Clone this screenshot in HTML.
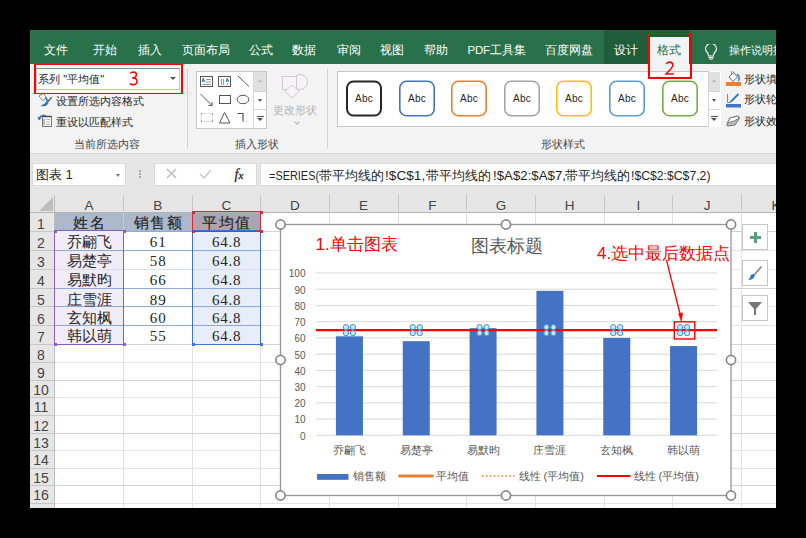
<!DOCTYPE html>
<html><head><meta charset="utf-8">
<style>
*{box-sizing:border-box;margin:0;padding:0}
html,body{width:806px;height:538px;overflow:hidden;background:#000}
body{position:relative;font-family:"Liberation Sans",sans-serif;color:#262626}
.a{position:absolute;white-space:nowrap}
#win{position:absolute;left:30px;top:30px;width:746px;height:478px;background:#e6e6e6;overflow:hidden}
.tab{position:absolute;top:43px;font-size:12px;line-height:14px;color:#fff;white-space:nowrap}
.sep{position:absolute;width:1px;background:#d2d2d2}
.t12{position:absolute;font-size:11.3px;line-height:14px;color:#262626;white-space:nowrap}
.glabel{position:absolute;font-size:11.3px;line-height:14px;color:#444;white-space:nowrap}
.sbox{position:absolute;top:80.5px;width:36px;height:36px;border:2px solid;border-radius:7px;background:#fff;font-size:10px;line-height:32px;text-align:center;color:#262626}
.colh{position:absolute;top:195px;height:17px;font-size:13px;line-height:17px;text-align:center;color:#444;border-right:1px solid #c6c6c6}
.rowh{position:absolute;left:30px;width:24.5px;font-size:13px;text-align:center;color:#444;border-bottom:1px solid #c6c6c6}
.hl{position:absolute;height:1px;background:#e1e1e1}
.vl{position:absolute;width:1px;background:#e1e1e1}
.cell{position:absolute;font-family:"Liberation Serif",serif;font-size:15px;line-height:19px;padding-top:1.5px;text-align:center;color:#262626;white-space:nowrap}
</style></head><body>
<div id="win"></div>
<!-- TABS -->
<div class="a" style="left:30px;top:30px;width:746px;height:34px;background:#29714a"></div>
<div class="tab" style="left:44px">文件</div>
<div class="tab" style="left:93px">开始</div>
<div class="tab" style="left:138px">插入</div>
<div class="tab" style="left:182px">页面布局</div>
<div class="tab" style="left:249px">公式</div>
<div class="tab" style="left:292px">数据</div>
<div class="tab" style="left:337px">审阅</div>
<div class="tab" style="left:380px">视图</div>
<div class="tab" style="left:424px">帮助</div>
<div class="tab" style="left:467.5px;font-size:11.5px;letter-spacing:-0.2px">PDF工具集</div>
<div class="tab" style="left:545px;font-size:11.55px">百度网盘</div>
<div class="a" style="left:604px;top:30px;width:86px;height:34px;background:#215c3b"></div>
<div class="tab" style="left:614px">设计</div>
<div class="a" style="left:649px;top:37px;width:40px;height:27px;background:#f3f3f3"></div>
<div class="tab" style="left:657px;color:#29714a">格式</div>
<div class="tab" style="left:729px;font-size:11.4px">操作说明搜索</div>
<!-- RIBBON -->
<div class="a" style="left:30px;top:64px;width:746px;height:90px;background:#f3f3f3;border-bottom:1px solid #d6d6d6"></div>

<!-- Group 1: current selection -->
<div class="a" style="left:35px;top:65px;width:147px;height:27px;background:#f9f9f9"></div>
<div class="a" style="left:36px;top:68px;width:144px;height:22px;background:#fff;border:1px solid #c6c6c6;border-top-color:#8a8a8a;border-bottom:1.5px solid #c0c0c0"></div>
<div class="a" style="left:34px;top:64px;width:149px;height:30px;border:2px solid #ff0000;border-top-width:1.6px;border-bottom-width:1.6px"></div>
<div class="t12" style="left:38px;top:72px">系列 "平均值"</div>
<svg class="a" style="left:128.5px;top:70.5px" width="10" height="15" viewBox="0 0 10 15"><path d="M1.2 2.4 Q2.4 0.9 4.4 0.9 Q7.4 1 7.4 3.8 Q7.3 6.6 3.8 6.9 L3 6.9 M3.8 6.9 Q8 7 8 10.3 Q8 13.6 4.3 13.7 Q2 13.7 0.8 12.4" fill="none" stroke="#ff0000" stroke-width="1.5"/></svg>
<div class="a" style="left:170px;top:77px;width:0;height:0;border-left:3px solid transparent;border-right:3px solid transparent;border-top:3px solid #555"></div>
<svg class="a" style="left:34px;top:90px" width="24" height="40" viewBox="0 0 24 40">
 <path d="M5 6 L9.5 3.5 L12.5 8 L8.5 10.5 Z" fill="#fff" stroke="#777" stroke-width="0.9"/>
 <path d="M7.5 5 v-2.5 M9.5 4.5 v-2" stroke="#777" stroke-width="0.8"/>
 <path d="M11.5 7.5 Q14.5 10.5 12 13.5 L9 15.5 Q12 15.5 14 13" stroke="#2f75c2" stroke-width="1.6" fill="none"/>
 <path d="M8 16 Q10 13.5 12.5 14.5 Q11 16.5 8 16 Z" fill="#2f75c2"/>
 <path d="M13.5 12 L17.5 7.5" stroke="#666" stroke-width="1.6"/>
 <path d="M17 8 L18.5 6.5" stroke="#888" stroke-width="1"/>
 <rect x="8.5" y="26.5" width="9" height="10" fill="#fff" stroke="#777" stroke-width="1"/>
 <path d="M8.5 26.5 h9" stroke="#444" stroke-width="1.4"/>
 <path d="M12 29.5h4M12 32h4M12 34.5h4" stroke="#aaa" stroke-width="0.9"/>
 <path d="M10 29v6" stroke="#666" stroke-width="0.9"/>
 <path d="M5 29.5 Q6 25 10.5 25.5 L12 26" stroke="#2f75c2" stroke-width="1.5" fill="none"/>
 <path d="M3.5 27 L5 30.5 L7.5 27.5 Z" fill="#2f75c2"/>
</svg>
<div class="t12" style="left:56px;top:94px">设置所选内容格式</div>

<div class="t12" style="left:56px;top:115px">重设以匹配样式</div>
<div class="glabel" style="left:74px;top:137px">当前所选内容</div>
<div class="sep" style="left:187px;top:69px;height:80px"></div>
<!-- Group 2: insert shapes -->
<div class="a" style="left:196px;top:71px;width:71px;height:58px;background:#fff;border:1px solid #c6c6c6"></div>
<div class="a" style="left:253px;top:71px;width:14px;height:58px;border-left:1px solid #d6d6d6"></div>
<div class="a" style="left:254px;top:72px;width:12px;height:19px;background:#e1e1e1"></div>
<div class="a" style="left:254px;top:91px;width:12px;height:1px;background:#d6d6d6"></div>
<div class="a" style="left:254px;top:109px;width:12px;height:1px;background:#d6d6d6"></div>
<div class="a" style="left:258px;top:79px;width:0;height:0;border-left:2.5px solid transparent;border-right:2.5px solid transparent;border-bottom:3px solid #bbb"></div>
<div class="a" style="left:258px;top:99px;width:0;height:0;border-left:2.5px solid transparent;border-right:2.5px solid transparent;border-top:3px solid #555"></div>
<div class="a" style="left:257px;top:116px;width:7px;height:1px;background:#555"></div>
<div class="a" style="left:257px;top:118px;width:0;height:0;border-left:3.5px solid transparent;border-right:3.5px solid transparent;border-top:3.5px solid #555"></div>
<svg class="a" style="left:195px;top:70px" width="58" height="58" viewBox="0 0 58 58">
 <g fill="none" stroke="#555" stroke-width="1">
  <rect x="5.5" y="6.5" width="12" height="10"/>
  <rect x="23.5" y="6.5" width="12" height="10"/>
  <path d="M43 6 L54 16.5"/>
  <path d="M5.5 24 L17 35.5"/>
  <path d="M13.5 35.5 L17 35.5 L17 32"/>
  <rect x="24.5" y="25.5" width="11" height="8"/>
  <ellipse cx="48" cy="29.5" rx="5.8" ry="4.2"/>
  <path d="M29.5 42.5 L24.5 53 L35 53 Z"/>
  <path d="M42.5 43.5 L48 43.5 L48 51.5" stroke-width="1.2"/>
 </g>
 <path d="M11 9.5h5M11 12h5M7 14.5h9" stroke="#999" stroke-width="1"/>
 <path d="M26.5 9v6M28.5 9v6M32.5 13v2" stroke="#999" stroke-width="1"/>
 <path d="M7 12 L8.3 8 L9.6 12 M7.5 10.8h2" stroke="#2f75c2" stroke-width="1" fill="none"/>
 <path d="M31 12 L32.3 8 L33.6 12 M31.5 10.8h2" stroke="#2f75c2" stroke-width="1" fill="none"/>
 <rect x="6" y="43.5" width="11.5" height="8" rx="1.5" fill="none" stroke="#ddd"/>
 <path d="M6 44h1M17 44h1M6 51h1M17 51h1" stroke="#555"/>
 <path d="M48 51.5 L54 51.5" stroke="#ddd"/>
</svg>
<svg class="a" style="left:280px;top:73px" width="30" height="26" viewBox="0 0 30 26">
 <circle cx="20" cy="9" r="7.5" fill="#f7f4f8" stroke="#cfc8d0"/>
 <rect x="2.5" y="3.5" width="14" height="13" fill="#f7f4f8" stroke="#cfc8d0"/>
 <path d="M12 12 L19 18 L12 25 L5 18 Z" fill="#f7f4f8" stroke="#cfc8d0"/>
</svg>
<div class="glabel" style="left:273px;top:103px;color:#b4b4b4">更改形状</div>
<div class="a" style="left:294.5px;top:120px;width:4px;height:4px;border-right:1px solid #b4b4b4;border-bottom:1px solid #b4b4b4;transform:rotate(45deg)"></div>
<div class="glabel" style="left:235px;top:137px">插入形状</div>
<div class="sep" style="left:327px;top:69px;height:80px"></div>
<!-- Group 3: shape styles -->
<div class="a" style="left:337px;top:71px;width:384px;height:56px;background:#fff;border:1px solid #c6c6c6"></div>
<div class="a" style="left:708px;top:71px;width:13px;height:56px;border-left:1px solid #d6d6d6;background:#fff"></div>
<div class="a" style="left:709px;top:72px;width:11px;height:19px;background:#e1e1e1"></div>
<div class="a" style="left:709px;top:91px;width:11px;height:1px;background:#d6d6d6"></div>
<div class="a" style="left:709px;top:109px;width:11px;height:1px;background:#d6d6d6"></div>
<div class="a" style="left:712px;top:79px;width:0;height:0;border-left:2.5px solid transparent;border-right:2.5px solid transparent;border-bottom:3px solid #bbb"></div>
<div class="a" style="left:712px;top:99px;width:0;height:0;border-left:2.5px solid transparent;border-right:2.5px solid transparent;border-top:3px solid #555"></div>
<div class="a" style="left:711px;top:116px;width:7px;height:1px;background:#555"></div>
<div class="a" style="left:711px;top:118px;width:0;height:0;border-left:3.5px solid transparent;border-right:3.5px solid transparent;border-top:3.5px solid #555"></div>
<svg class="a" style="left:330px;top:70px" width="380" height="60" viewBox="0 0 380 60" font-family="Liberation Sans, sans-serif">
<rect x="17.00" y="11.50" width="34.00" height="34.00" rx="6.5" fill="#fff" stroke="#262626" stroke-width="2"/>
<text x="34" y="32" font-size="10" fill="#262626" text-anchor="middle" letter-spacing="0.2">Abc</text>
<rect x="69.80" y="11.30" width="34.40" height="34.40" rx="6.5" fill="#fff" stroke="#4472c4" stroke-width="1.6"/>
<text x="87" y="32" font-size="10" fill="#262626" text-anchor="middle" letter-spacing="0.2">Abc</text>
<rect x="121.80" y="11.30" width="34.40" height="34.40" rx="6.5" fill="#fff" stroke="#ed7d31" stroke-width="1.6"/>
<text x="139" y="32" font-size="10" fill="#262626" text-anchor="middle" letter-spacing="0.2">Abc</text>
<rect x="174.80" y="11.30" width="34.40" height="34.40" rx="6.5" fill="#fff" stroke="#a5a5a5" stroke-width="1.6"/>
<text x="192" y="32" font-size="10" fill="#262626" text-anchor="middle" letter-spacing="0.2">Abc</text>
<rect x="226.80" y="11.30" width="34.40" height="34.40" rx="6.5" fill="#fff" stroke="#ffc000" stroke-width="1.6"/>
<text x="244" y="32" font-size="10" fill="#262626" text-anchor="middle" letter-spacing="0.2">Abc</text>
<rect x="279.80" y="11.30" width="34.40" height="34.40" rx="6.5" fill="#fff" stroke="#5b9bd5" stroke-width="1.6"/>
<text x="297" y="32" font-size="10" fill="#262626" text-anchor="middle" letter-spacing="0.2">Abc</text>
<rect x="332.80" y="11.30" width="34.40" height="34.40" rx="6.5" fill="#fff" stroke="#70ad47" stroke-width="1.6"/>
<text x="350" y="32" font-size="10" fill="#262626" text-anchor="middle" letter-spacing="0.2">Abc</text>
</svg>
<div class="glabel" style="left:541px;top:137px">形状样式</div>
<svg class="a" style="left:722px;top:68px" width="22" height="62" viewBox="0 0 22 62">
 <path d="M11.5 4.5 L15.5 9 L11 13.5 L7 9 Z" fill="#fff" stroke="#666" stroke-width="1"/>
 <path d="M9.5 3 v3 M12 3.5 v2" stroke="#888" stroke-width="0.8"/>
 <path d="M15 6 Q18.5 8.5 16.5 13" stroke="#2f75c2" stroke-width="1.4" fill="none"/>
 <rect x="4" y="14" width="15" height="4" fill="#ed7d31"/>
 <path d="M5.5 26 v8.5 h3" stroke="#888" stroke-width="1" fill="none"/>
 <path d="M9 33.5 L16.5 26" stroke="#2f75c2" stroke-width="1.8"/>
 <path d="M8 35 L9 33" stroke="#2f75c2" stroke-width="1"/>
 <rect x="4" y="36" width="15" height="3.5" fill="#4472c4"/>
 <path d="M8 50 L16 48 Q18 48.5 17 51 L13 57 L6 58 Q4 57.5 5 56 Z" fill="#bdbdbd" stroke="#666" stroke-width="0.9"/>
 <path d="M8 50 L16 48 Q17.5 48.5 16.5 50.5 L12 53 L5.5 55 Z" fill="#fff" stroke="#666" stroke-width="0.8"/>
</svg>
<div class="t12" style="left:744px;top:72px">形状填充</div>
<div class="t12" style="left:744px;top:92px">形状轮廓</div>
<div class="t12" style="left:744px;top:114px">形状效果</div>

<!-- FORMULA BAR -->
<div class="a" style="left:32px;top:163px;width:94px;height:23px;background:#fff;border:1px solid #dadada"></div>
<div class="a" style="left:36px;top:167px;font-size:13px;line-height:15px;color:#262626">图表 1</div>
<div class="a" style="left:116px;top:174px;width:0;height:0;border-left:2.5px solid transparent;border-right:2.5px solid transparent;border-top:3px solid #777"></div>
<div class="a" style="left:139px;top:170px;width:2px;height:2px;background:#aaa"></div>
<div class="a" style="left:139px;top:173px;width:2px;height:2px;background:#aaa"></div>
<div class="a" style="left:139px;top:176px;width:2px;height:2px;background:#aaa"></div>
<div class="a" style="left:154px;top:163px;width:102.5px;height:22.5px;background:#fff;border:1px solid #dadada"></div>
<svg class="a" style="left:165px;top:168px" width="14" height="12" viewBox="0 0 14 12"><path d="M2 1 L11 10 M11 1 L2 10" stroke="#b8b8b8" stroke-width="1.2"/></svg>
<svg class="a" style="left:199px;top:168px" width="14" height="12" viewBox="0 0 14 12"><path d="M1 6 L5 10 L12 2" stroke="#c8c8c8" stroke-width="1.5" fill="none"/></svg>
<div class="a" style="left:234.5px;top:165.5px;font-family:'Liberation Serif',serif;font-style:italic;font-weight:normal;font-size:14px;line-height:18px;color:#2a2a2a;-webkit-text-stroke:0.3px #2a2a2a">f<span style="font-size:11px">x</span></div>
<div class="a" style="left:260px;top:163px;width:520px;height:22.5px;background:#fff;border:1px solid #dadada"></div>
<div class="a" style="left:268.5px;top:167.5px;font-size:13px;line-height:15px;color:#262626;transform-origin:0 0;transform:scaleX(0.84)">=SERIES(</div>
<div class="a" style="left:318.5px;top:167.5px;font-size:13px;line-height:15px;color:#262626;transform-origin:0 0;transform:scaleX(1)">带平均线的</div>
<div class="a" style="left:384.5px;top:167.5px;font-size:13px;line-height:15px;color:#262626;transform-origin:0 0;transform:scaleX(1.05)">!$C$1,</div>
<div class="a" style="left:426px;top:167.5px;font-size:13px;line-height:15px;color:#262626;transform-origin:0 0;transform:scaleX(1)">带平均线的</div>
<div class="a" style="left:492.5px;top:167.5px;font-size:13px;line-height:15px;color:#262626;transform-origin:0 0;transform:scaleX(1.02)">!$A$2:$A$7,</div>
<div class="a" style="left:565px;top:167.5px;font-size:13px;line-height:15px;color:#262626;transform-origin:0 0;transform:scaleX(1)">带平均线的</div>
<div class="a" style="left:630.5px;top:167.5px;font-size:13px;line-height:15px;color:#262626;transform-origin:0 0;transform:scaleX(0.94)">!$C$2:$C$7,2)</div>
<!-- GRID -->
<div class="a" style="left:30px;top:195px;width:746px;height:313px;background:#fff"></div>
<div class="a" style="left:30px;top:195px;width:746px;height:17px;background:#e6e6e6"></div>
<div class="a" style="left:30px;top:212px;width:24px;height:296px;background:#e6e6e6"></div>
<div class="a" style="left:54px;top:195px;width:1px;height:313px;background:#bdbdbd"></div>
<div class="a" style="left:39px;top:196.5px;width:0;height:0;border-left:14px solid transparent;border-bottom:14px solid #bdbdbd"></div>
<div class="a" style="left:54.5px;top:196.5px;width:69.0px;height:17px;font-size:13.5px;line-height:17px;text-align:center;color:#444">A</div>
<div class="a" style="left:123.5px;top:196.5px;width:68.5px;height:17px;font-size:13.5px;line-height:17px;text-align:center;color:#444">B</div>
<div class="a" style="left:192px;top:196.5px;width:68.5px;height:17px;font-size:13.5px;line-height:17px;text-align:center;color:#444">C</div>
<div class="a" style="left:260.5px;top:196.5px;width:68.7px;height:17px;font-size:13.5px;line-height:17px;text-align:center;color:#444">D</div>
<div class="a" style="left:329.2px;top:196.5px;width:68.8px;height:17px;font-size:13.5px;line-height:17px;text-align:center;color:#444">E</div>
<div class="a" style="left:398px;top:196.5px;width:68.7px;height:17px;font-size:13.5px;line-height:17px;text-align:center;color:#444">F</div>
<div class="a" style="left:466.7px;top:196.5px;width:68.7px;height:17px;font-size:13.5px;line-height:17px;text-align:center;color:#444">G</div>
<div class="a" style="left:535.4px;top:196.5px;width:68.7px;height:17px;font-size:13.5px;line-height:17px;text-align:center;color:#444">H</div>
<div class="a" style="left:604.1px;top:196.5px;width:68.8px;height:17px;font-size:13.5px;line-height:17px;text-align:center;color:#444">I</div>
<div class="a" style="left:672.9px;top:196.5px;width:68.7px;height:17px;font-size:13.5px;line-height:17px;text-align:center;color:#444">J</div>
<div class="a" style="left:741.6px;top:196.5px;width:68.7px;height:17px;font-size:13.5px;line-height:17px;text-align:center;color:#444">K</div>
<div class="a" style="left:123px;top:195px;width:1px;height:16px;background:#c6c6c6"></div>
<div class="vl" style="left:123px;top:212px;height:296px;background:#e2e2e2"></div>
<div class="a" style="left:192px;top:195px;width:1px;height:16px;background:#c6c6c6"></div>
<div class="vl" style="left:192px;top:212px;height:296px;background:#e2e2e2"></div>
<div class="a" style="left:260px;top:195px;width:1px;height:16px;background:#c6c6c6"></div>
<div class="vl" style="left:260px;top:212px;height:296px;background:#e2e2e2"></div>
<div class="a" style="left:329px;top:195px;width:1px;height:16px;background:#c6c6c6"></div>
<div class="vl" style="left:329px;top:212px;height:296px;background:#e2e2e2"></div>
<div class="a" style="left:398px;top:195px;width:1px;height:16px;background:#c6c6c6"></div>
<div class="vl" style="left:398px;top:212px;height:296px;background:#e2e2e2"></div>
<div class="a" style="left:466px;top:195px;width:1px;height:16px;background:#c6c6c6"></div>
<div class="vl" style="left:466px;top:212px;height:296px;background:#e2e2e2"></div>
<div class="a" style="left:535px;top:195px;width:1px;height:16px;background:#c6c6c6"></div>
<div class="vl" style="left:535px;top:212px;height:296px;background:#e2e2e2"></div>
<div class="a" style="left:604px;top:195px;width:1px;height:16px;background:#c6c6c6"></div>
<div class="vl" style="left:604px;top:212px;height:296px;background:#e2e2e2"></div>
<div class="a" style="left:672px;top:195px;width:1px;height:16px;background:#c6c6c6"></div>
<div class="vl" style="left:672px;top:212px;height:296px;background:#e2e2e2"></div>
<div class="a" style="left:741px;top:195px;width:1px;height:16px;background:#c6c6c6"></div>
<div class="vl" style="left:741px;top:212px;height:296px;background:#e2e2e2"></div>
<div class="hl" style="left:55px;top:231px;width:721px;background:#d2d2d2"></div>
<div class="a" style="left:30px;top:231px;width:24px;height:1px;background:#c6c6c6"></div>
<div class="hl" style="left:55px;top:250px;width:721px;background:#e4e4e4"></div>
<div class="a" style="left:30px;top:250px;width:24px;height:1px;background:#c6c6c6"></div>
<div class="hl" style="left:55px;top:269px;width:721px;background:#e4e4e4"></div>
<div class="a" style="left:30px;top:269px;width:24px;height:1px;background:#c6c6c6"></div>
<div class="hl" style="left:55px;top:288px;width:721px;background:#d2d2d2"></div>
<div class="a" style="left:30px;top:288px;width:24px;height:1px;background:#c6c6c6"></div>
<div class="hl" style="left:55px;top:306px;width:721px;background:#e4e4e4"></div>
<div class="a" style="left:30px;top:306px;width:24px;height:1px;background:#c6c6c6"></div>
<div class="hl" style="left:55px;top:325px;width:721px;background:#e4e4e4"></div>
<div class="a" style="left:30px;top:325px;width:24px;height:1px;background:#c6c6c6"></div>
<div class="hl" style="left:55px;top:344px;width:721px;background:#d2d2d2"></div>
<div class="a" style="left:30px;top:344px;width:24px;height:1px;background:#c6c6c6"></div>
<div class="hl" style="left:55px;top:362px;width:721px;background:#e4e4e4"></div>
<div class="a" style="left:30px;top:362px;width:24px;height:1px;background:#c6c6c6"></div>
<div class="hl" style="left:55px;top:380px;width:721px;background:#d2d2d2"></div>
<div class="a" style="left:30px;top:380px;width:24px;height:1px;background:#c6c6c6"></div>
<div class="hl" style="left:55px;top:397px;width:721px;background:#e4e4e4"></div>
<div class="a" style="left:30px;top:397px;width:24px;height:1px;background:#c6c6c6"></div>
<div class="hl" style="left:55px;top:415px;width:721px;background:#e4e4e4"></div>
<div class="a" style="left:30px;top:415px;width:24px;height:1px;background:#c6c6c6"></div>
<div class="hl" style="left:55px;top:433px;width:721px;background:#d2d2d2"></div>
<div class="a" style="left:30px;top:433px;width:24px;height:1px;background:#c6c6c6"></div>
<div class="hl" style="left:55px;top:450px;width:721px;background:#e4e4e4"></div>
<div class="a" style="left:30px;top:450px;width:24px;height:1px;background:#c6c6c6"></div>
<div class="hl" style="left:55px;top:468px;width:721px;background:#e4e4e4"></div>
<div class="a" style="left:30px;top:468px;width:24px;height:1px;background:#c6c6c6"></div>
<div class="hl" style="left:55px;top:485px;width:721px;background:#d2d2d2"></div>
<div class="a" style="left:30px;top:485px;width:24px;height:1px;background:#c6c6c6"></div>
<div class="hl" style="left:55px;top:503px;width:721px;background:#e4e4e4"></div>
<div class="a" style="left:30px;top:503px;width:24px;height:1px;background:#c6c6c6"></div>
<div class="a" style="left:28.7px;top:215px;width:24.5px;height:19px;font-size:14px;line-height:19px;text-align:center;color:#444">1</div>
<div class="a" style="left:28.7px;top:234px;width:24.5px;height:19px;font-size:14px;line-height:19px;text-align:center;color:#444">2</div>
<div class="a" style="left:28.7px;top:253px;width:24.5px;height:19px;font-size:14px;line-height:19px;text-align:center;color:#444">3</div>
<div class="a" style="left:28.7px;top:272px;width:24.5px;height:19px;font-size:14px;line-height:19px;text-align:center;color:#444">4</div>
<div class="a" style="left:28.7px;top:291px;width:24.5px;height:18.5px;font-size:14px;line-height:18.5px;text-align:center;color:#444">5</div>
<div class="a" style="left:28.7px;top:309.5px;width:24.5px;height:18.5px;font-size:14px;line-height:18.5px;text-align:center;color:#444">6</div>
<div class="a" style="left:28.7px;top:328px;width:24.5px;height:19px;font-size:14px;line-height:19px;text-align:center;color:#444">7</div>
<div class="a" style="left:28.7px;top:345.8px;width:24.5px;height:18px;font-size:14px;line-height:18px;text-align:center;color:#444">8</div>
<div class="a" style="left:28.7px;top:363.8px;width:24.5px;height:18px;font-size:14px;line-height:18px;text-align:center;color:#444">9</div>
<div class="a" style="left:28.7px;top:381.8px;width:24.5px;height:17.5px;font-size:14px;line-height:17.5px;text-align:center;color:#444">10</div>
<div class="a" style="left:28.7px;top:399.3px;width:24.5px;height:17.5px;font-size:14px;line-height:17.5px;text-align:center;color:#444">11</div>
<div class="a" style="left:28.7px;top:416.8px;width:24.5px;height:18px;font-size:14px;line-height:18px;text-align:center;color:#444">12</div>
<div class="a" style="left:28.7px;top:434.8px;width:24.5px;height:17.5px;font-size:14px;line-height:17.5px;text-align:center;color:#444">13</div>
<div class="a" style="left:28.7px;top:452.3px;width:24.5px;height:17.5px;font-size:14px;line-height:17.5px;text-align:center;color:#444">14</div>
<div class="a" style="left:28.7px;top:469.8px;width:24.5px;height:17.5px;font-size:14px;line-height:17.5px;text-align:center;color:#444">15</div>
<div class="a" style="left:28.7px;top:487.3px;width:24.5px;height:17.5px;font-size:14px;line-height:17.5px;text-align:center;color:#444">16</div>
<!-- TABLE -->
<div class="a" style="left:55px;top:212px;width:137px;height:19px;background:#acb9ca"></div>
<div class="a" style="left:193px;top:212px;width:67px;height:19px;background:#a9a5b5"></div>
<div class="a" style="left:55px;top:231px;width:68px;height:113px;background:#f1edf8"></div>
<div class="a" style="left:193px;top:231px;width:67px;height:113px;background:#e7eef9"></div>
<div class="a" style="left:55px;top:250px;width:205px;height:1px;background:#8fa9dc"></div>
<div class="a" style="left:55px;top:269px;width:205px;height:1px;background:#d8def0"></div>
<div class="a" style="left:55px;top:288px;width:205px;height:1px;background:#8fa9dc"></div>
<div class="a" style="left:55px;top:306px;width:205px;height:1px;background:#8fa9dc"></div>
<div class="a" style="left:55px;top:325px;width:205px;height:1px;background:#8fa9dc"></div>
<div class="a" style="left:124px;top:231px;width:68px;height:1px;background:#8fa9dc"></div>
<div class="a" style="left:123px;top:212px;width:1px;height:19px;background:#c3cbd6"></div>
<div class="cell" style="left:54.5px;top:212px;width:69.0px;height:19px;-webkit-text-stroke:0.15px #262626;letter-spacing:1.5px;text-indent:1.5px">姓名</div>
<div class="cell" style="left:123.5px;top:212px;width:68.5px;height:19px;-webkit-text-stroke:0.15px #262626;letter-spacing:1.5px;text-indent:1.5px">销售额</div>
<div class="cell" style="left:192px;top:212px;width:68.5px;height:19px;-webkit-text-stroke:0.15px #262626;letter-spacing:1.5px;text-indent:1.5px">平均值</div>
<div class="cell" style="left:54.5px;top:231px;width:69.0px;height:19px">乔翩飞</div>
<div class="cell" style="left:123.5px;top:231px;width:68.5px;height:19px;letter-spacing:0.8px;text-indent:0.8px">61</div>
<div class="cell" style="left:192px;top:231px;width:68.5px;height:19px;letter-spacing:0.8px;text-indent:0.8px">64.8</div>
<div class="cell" style="left:54.5px;top:250px;width:69.0px;height:19px">易楚亭</div>
<div class="cell" style="left:123.5px;top:250px;width:68.5px;height:19px;letter-spacing:0.8px;text-indent:0.8px">58</div>
<div class="cell" style="left:192px;top:250px;width:68.5px;height:19px;letter-spacing:0.8px;text-indent:0.8px">64.8</div>
<div class="cell" style="left:54.5px;top:269px;width:69.0px;height:19px">易默昀</div>
<div class="cell" style="left:123.5px;top:269px;width:68.5px;height:19px;letter-spacing:0.8px;text-indent:0.8px">66</div>
<div class="cell" style="left:192px;top:269px;width:68.5px;height:19px;letter-spacing:0.8px;text-indent:0.8px">64.8</div>
<div class="cell" style="left:54.5px;top:289px;width:69.0px;height:19px">庄雪涯</div>
<div class="cell" style="left:123.5px;top:289px;width:68.5px;height:19px;letter-spacing:0.8px;text-indent:0.8px">89</div>
<div class="cell" style="left:192px;top:289px;width:68.5px;height:19px;letter-spacing:0.8px;text-indent:0.8px">64.8</div>
<div class="cell" style="left:54.5px;top:307.5px;width:69.0px;height:19px">玄知枫</div>
<div class="cell" style="left:123.5px;top:307.5px;width:68.5px;height:19px;letter-spacing:0.8px;text-indent:0.8px">60</div>
<div class="cell" style="left:192px;top:307.5px;width:68.5px;height:19px;letter-spacing:0.8px;text-indent:0.8px">64.8</div>
<div class="cell" style="left:54.5px;top:325px;width:69.0px;height:19px">韩以萌</div>
<div class="cell" style="left:123.5px;top:325px;width:68.5px;height:19px;letter-spacing:0.8px;text-indent:0.8px">55</div>
<div class="cell" style="left:192px;top:325px;width:68.5px;height:19px;letter-spacing:0.8px;text-indent:0.8px">64.8</div>
<div class="a" style="left:30px;top:211.7px;width:746px;height:1px;background:#b4b4b4"></div>
<div class="a" style="left:54px;top:230px;width:70px;height:115px;border:1.3px solid #8a5cc8"></div>
<div class="a" style="left:192px;top:211px;width:69px;height:21px;border:1.3px solid #d5283b"></div>
<div class="a" style="left:192px;top:230px;width:69px;height:115px;border:1.3px solid #3f73d0"></div>
<div class="a" style="left:191.5px;top:210.5px;width:3px;height:3px;background:#d5283b"></div>
<div class="a" style="left:259.5px;top:210.5px;width:3px;height:3px;background:#d5283b"></div>
<div class="a" style="left:191.5px;top:229.5px;width:3px;height:3px;background:#d5283b"></div>
<div class="a" style="left:259.5px;top:229.5px;width:3px;height:3px;background:#d5283b"></div>
<div class="a" style="left:53.5px;top:229.5px;width:3px;height:3px;background:#8a5cc8"></div>
<div class="a" style="left:122.5px;top:229.5px;width:3px;height:3px;background:#8a5cc8"></div>
<div class="a" style="left:53.5px;top:343px;width:3px;height:3px;background:#8a5cc8"></div>
<div class="a" style="left:122.5px;top:343px;width:3px;height:3px;background:#8a5cc8"></div>
<div class="a" style="left:191.5px;top:343px;width:3px;height:3px;background:#3f73d0"></div>
<div class="a" style="left:259.5px;top:343px;width:3px;height:3px;background:#3f73d0"></div>
<svg class="a" style="left:0;top:0" width="806" height="538" viewBox="0 0 806 538" font-family="Liberation Sans, sans-serif">
<rect x="280.5" y="224.5" width="450.5" height="271" fill="#fff" stroke="#969696" stroke-width="1.3"/>
<line x1="316" y1="435.30" x2="717" y2="435.30" stroke="#d9d9d9" stroke-width="1"/>
<text x="305.5" y="439.70" font-size="10" fill="#595959" text-anchor="end">0</text>
<line x1="316" y1="419.07" x2="717" y2="419.07" stroke="#d9d9d9" stroke-width="1"/>
<text x="305.5" y="423.47" font-size="10" fill="#595959" text-anchor="end">10</text>
<line x1="316" y1="402.84" x2="717" y2="402.84" stroke="#d9d9d9" stroke-width="1"/>
<text x="305.5" y="407.24" font-size="10" fill="#595959" text-anchor="end">20</text>
<line x1="316" y1="386.61" x2="717" y2="386.61" stroke="#d9d9d9" stroke-width="1"/>
<text x="305.5" y="391.01" font-size="10" fill="#595959" text-anchor="end">30</text>
<line x1="316" y1="370.38" x2="717" y2="370.38" stroke="#d9d9d9" stroke-width="1"/>
<text x="305.5" y="374.78" font-size="10" fill="#595959" text-anchor="end">40</text>
<line x1="316" y1="354.15" x2="717" y2="354.15" stroke="#d9d9d9" stroke-width="1"/>
<text x="305.5" y="358.55" font-size="10" fill="#595959" text-anchor="end">50</text>
<line x1="316" y1="337.92" x2="717" y2="337.92" stroke="#d9d9d9" stroke-width="1"/>
<text x="305.5" y="342.32" font-size="10" fill="#595959" text-anchor="end">60</text>
<line x1="316" y1="321.69" x2="717" y2="321.69" stroke="#d9d9d9" stroke-width="1"/>
<text x="305.5" y="326.09" font-size="10" fill="#595959" text-anchor="end">70</text>
<line x1="316" y1="305.46" x2="717" y2="305.46" stroke="#d9d9d9" stroke-width="1"/>
<text x="305.5" y="309.86" font-size="10" fill="#595959" text-anchor="end">80</text>
<line x1="316" y1="289.23" x2="717" y2="289.23" stroke="#d9d9d9" stroke-width="1"/>
<text x="305.5" y="293.63" font-size="10" fill="#595959" text-anchor="end">90</text>
<line x1="316" y1="273.00" x2="717" y2="273.00" stroke="#d9d9d9" stroke-width="1"/>
<text x="305.5" y="277.40" font-size="10" fill="#595959" text-anchor="end">100</text>
<rect x="335.92" y="336.30" width="27" height="99.00" fill="#4472c4"/>
<text x="349.42" y="454" font-size="11" fill="#595959" text-anchor="middle">乔翩飞</text>
<rect x="402.75" y="341.17" width="27" height="94.13" fill="#4472c4"/>
<text x="416.25" y="454" font-size="11" fill="#595959" text-anchor="middle">易楚亭</text>
<rect x="469.58" y="328.18" width="27" height="107.12" fill="#4472c4"/>
<text x="483.08" y="454" font-size="11" fill="#595959" text-anchor="middle">易默昀</text>
<rect x="536.42" y="290.85" width="27" height="144.45" fill="#4472c4"/>
<text x="549.92" y="454" font-size="11" fill="#595959" text-anchor="middle">庄雪涯</text>
<rect x="603.25" y="337.92" width="27" height="97.38" fill="#4472c4"/>
<text x="616.75" y="454" font-size="11" fill="#595959" text-anchor="middle">玄知枫</text>
<rect x="670.08" y="346.04" width="27" height="89.26" fill="#4472c4"/>
<text x="683.58" y="454" font-size="11" fill="#595959" text-anchor="middle">韩以萌</text>
<line x1="316" y1="330.13" x2="717" y2="330.13" stroke="#ff0000" stroke-width="2.2"/>
<path d="M345.92 327.13 H352.92 M345.92 333.13 H352.92" stroke="#666" stroke-width="0.6"/>
<circle cx="345.92" cy="327.13" r="2.6" fill="#cfe5f8" stroke="#3d8fe0" stroke-width="1"/>
<circle cx="345.92" cy="333.13" r="2.6" fill="#cfe5f8" stroke="#3d8fe0" stroke-width="1"/>
<circle cx="352.92" cy="327.13" r="2.6" fill="#cfe5f8" stroke="#3d8fe0" stroke-width="1"/>
<circle cx="352.92" cy="333.13" r="2.6" fill="#cfe5f8" stroke="#3d8fe0" stroke-width="1"/>
<path d="M412.75 327.13 H419.75 M412.75 333.13 H419.75" stroke="#666" stroke-width="0.6"/>
<circle cx="412.75" cy="327.13" r="2.6" fill="#cfe5f8" stroke="#3d8fe0" stroke-width="1"/>
<circle cx="412.75" cy="333.13" r="2.6" fill="#cfe5f8" stroke="#3d8fe0" stroke-width="1"/>
<circle cx="419.75" cy="327.13" r="2.6" fill="#cfe5f8" stroke="#3d8fe0" stroke-width="1"/>
<circle cx="419.75" cy="333.13" r="2.6" fill="#cfe5f8" stroke="#3d8fe0" stroke-width="1"/>
<path d="M479.58 327.13 H486.58 M479.58 333.13 H486.58" stroke="#666" stroke-width="0.6"/>
<circle cx="479.58" cy="327.13" r="2.6" fill="#cfe5f8" stroke="#3d8fe0" stroke-width="1"/>
<circle cx="479.58" cy="333.13" r="2.6" fill="#cfe5f8" stroke="#3d8fe0" stroke-width="1"/>
<circle cx="486.58" cy="327.13" r="2.6" fill="#cfe5f8" stroke="#3d8fe0" stroke-width="1"/>
<circle cx="486.58" cy="333.13" r="2.6" fill="#cfe5f8" stroke="#3d8fe0" stroke-width="1"/>
<path d="M546.42 327.13 H553.42 M546.42 333.13 H553.42" stroke="#666" stroke-width="0.6"/>
<circle cx="546.42" cy="327.13" r="2.6" fill="#cfe5f8" stroke="#3d8fe0" stroke-width="1"/>
<circle cx="546.42" cy="333.13" r="2.6" fill="#cfe5f8" stroke="#3d8fe0" stroke-width="1"/>
<circle cx="553.42" cy="327.13" r="2.6" fill="#cfe5f8" stroke="#3d8fe0" stroke-width="1"/>
<circle cx="553.42" cy="333.13" r="2.6" fill="#cfe5f8" stroke="#3d8fe0" stroke-width="1"/>
<path d="M613.25 327.13 H620.25 M613.25 333.13 H620.25" stroke="#666" stroke-width="0.6"/>
<circle cx="613.25" cy="327.13" r="2.6" fill="#cfe5f8" stroke="#3d8fe0" stroke-width="1"/>
<circle cx="613.25" cy="333.13" r="2.6" fill="#cfe5f8" stroke="#3d8fe0" stroke-width="1"/>
<circle cx="620.25" cy="327.13" r="2.6" fill="#cfe5f8" stroke="#3d8fe0" stroke-width="1"/>
<circle cx="620.25" cy="333.13" r="2.6" fill="#cfe5f8" stroke="#3d8fe0" stroke-width="1"/>
<path d="M680.08 327.13 H687.08 M680.08 333.13 H687.08" stroke="#666" stroke-width="0.6"/>
<circle cx="680.08" cy="327.13" r="2.6" fill="#cfe5f8" stroke="#3d8fe0" stroke-width="1"/>
<circle cx="680.08" cy="333.13" r="2.6" fill="#cfe5f8" stroke="#3d8fe0" stroke-width="1"/>
<circle cx="687.08" cy="327.13" r="2.6" fill="#cfe5f8" stroke="#3d8fe0" stroke-width="1"/>
<circle cx="687.08" cy="333.13" r="2.6" fill="#cfe5f8" stroke="#3d8fe0" stroke-width="1"/>
<rect x="674.3" y="321.8" width="20.5" height="17.2" fill="none" stroke="#ff0000" stroke-width="1.4"/>
<line x1="666.5" y1="260" x2="680.3" y2="315" stroke="#ff0000" stroke-width="1.3"/>
<path d="M678.6 313.8 L681.3 321.6 L682.6 312.9 Z" fill="#ff0000" stroke="#ff0000" stroke-width="0.6"/>
<text x="471" y="251.5" font-size="17.5" fill="#595959">图表标题</text>
<text x="315.5" y="250" font-size="17" fill="#ff0000">1.单击图表</text>
<text x="597" y="259" font-size="16.9" fill="#ff0000">4.选中最后数据点</text>
<rect x="317" y="474" width="31.5" height="5.8" fill="#4472c4"/>
<text x="353" y="480" font-size="11" fill="#595959">销售额</text>
<line x1="399.5" y1="476" x2="432.5" y2="476" stroke="#ed7d31" stroke-width="2.8" stroke-linecap="round"/>
<text x="435.5" y="480" font-size="11" fill="#595959">平均值</text>
<line x1="482" y1="476" x2="514.5" y2="476" stroke="#ed7d31" stroke-width="1.6" stroke-dasharray="1.6 2.3"/>
<text x="518.5" y="480" font-size="11" fill="#595959">线性 (平均值)</text>
<line x1="597" y1="476" x2="630.5" y2="476" stroke="#ff0000" stroke-width="2.2"/>
<text x="633.5" y="480" font-size="11" fill="#595959">线性 (平均值)</text>
<circle cx="280.5" cy="224.5" r="4.6" fill="#fff" stroke="#8a8a8a" stroke-width="1.7"/>
<circle cx="506" cy="224.5" r="4.6" fill="#fff" stroke="#8a8a8a" stroke-width="1.7"/>
<circle cx="731" cy="224.5" r="4.6" fill="#fff" stroke="#8a8a8a" stroke-width="1.7"/>
<circle cx="280.5" cy="360" r="4.6" fill="#fff" stroke="#8a8a8a" stroke-width="1.7"/>
<circle cx="731" cy="360" r="4.6" fill="#fff" stroke="#8a8a8a" stroke-width="1.7"/>
<circle cx="280.5" cy="495.5" r="4.6" fill="#fff" stroke="#8a8a8a" stroke-width="1.7"/>
<circle cx="506" cy="495.5" r="4.6" fill="#fff" stroke="#8a8a8a" stroke-width="1.7"/>
<circle cx="731" cy="495.5" r="4.6" fill="#fff" stroke="#8a8a8a" stroke-width="1.7"/>
</svg>
<div class="a" style="left:742px;top:224px;width:26px;height:26px;background:#fff;border:1px solid #c6c6c6"></div>
<div class="a" style="left:742px;top:260px;width:26px;height:26px;background:#fff;border:1px solid #c6c6c6"></div>
<div class="a" style="left:742px;top:295px;width:26px;height:26px;background:#fff;border:1px solid #c6c6c6"></div>
<div class="a" style="left:750px;top:236px;width:11px;height:3px;background:#5a9f77"></div>
<div class="a" style="left:754px;top:232px;width:3px;height:11px;background:#5a9f77"></div>
<svg class="a" style="left:745px;top:263px" width="20" height="20" viewBox="0 0 20 20"><path d="M16 3 L9 11 L10 12 L17 4 Z" fill="#777"/><path d="M9 11 Q5 11 5 15 L3 17 Q9 17 10 12 Z" fill="#2f75c2"/></svg>
<svg class="a" style="left:745px;top:298px" width="20" height="20" viewBox="0 0 20 20"><path d="M3 4 L17 4 L11 11 L11 17 L9 17 L9 11 Z" fill="#777"/></svg>
<div class="a" style="left:648px;top:33px;width:44px;height:45.8px;border:2px solid #ff0000;border-top-width:1.6px"></div>
<svg class="a" style="left:665.3px;top:61px" width="10" height="15" viewBox="0 0 10 15"><path d="M1.2 3 Q2.2 0.9 4.5 0.9 Q7.8 1 7.8 4 Q7.8 6 5.6 8.2 L1 13.1 L8.8 13.1" fill="none" stroke="#ff0000" stroke-width="1.5"/></svg>
<svg class="a" style="left:703px;top:44px" width="16" height="17" viewBox="0 0 16 17"><path d="M5.5 12 Q5.5 9.5 4 8 Q2.5 6.5 2.5 5 A5.5 5.5 0 0 1 13.5 5 Q13.5 6.5 12 8 Q10.5 9.5 10.5 12 Z" fill="none" stroke="#fff" stroke-width="1.1"/><path d="M5.5 13.5h5M6 15h4" stroke="#fff" stroke-width="1"/></svg>
<div class="a" style="left:776px;top:0;width:30px;height:538px;background:#000"></div>
<div class="a" style="left:0;top:508px;width:806px;height:30px;background:#000"></div>
</body></html>
